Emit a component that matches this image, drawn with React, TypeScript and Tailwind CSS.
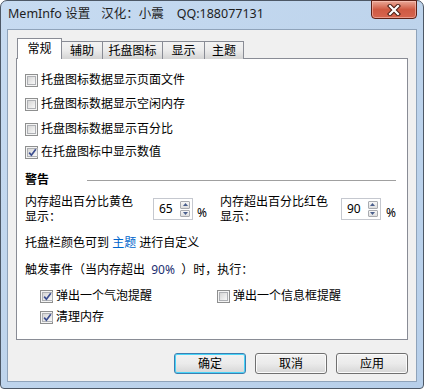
import React from 'react';

const Check: React.FC<{ checked?: boolean }> = ({ checked }) => (
  <span className="w-[13px] h-[13px] shrink-0 border border-[#8e8f8f] bg-[#f4f4f4] p-[1px] flex">
    <span className="flex-1 border border-[#aeb0b4] bg-gradient-to-br from-[#d6d6d6] to-[#f8f8f8] flex items-center justify-center">
      {checked && (
        <svg width="9" height="9" viewBox="0 0 9 9">
          <path d="M1.2 4.6 L3.4 7.2 L7.8 1.2" fill="none" stroke="#3b4d8f" strokeWidth="1.7" />
        </svg>
      )}
    </span>
  </span>
);

const CheckRow: React.FC<{ checked?: boolean; label: string; className?: string }> = ({ checked, label, className }) => (
  <div className={`h-[16px] flex items-center gap-[3px] ${className ?? ''}`}>
    <Check checked={checked} />
    <span>{label}</span>
  </div>
);

const Spin: React.FC<{ value: string }> = ({ value }) => (
  <div className="w-[40px] h-[22px] shrink-0 border border-[#c5c8cf] bg-white flex items-center mt-[4px]">
    <span className="flex-1 pl-[5px] leading-none">{value}</span>
    <div className="w-[12px] h-full py-[2px] pr-[2px] flex flex-col gap-[1px]">
      <div className="flex-1 border border-[#a9abb0] rounded-[1px] bg-gradient-to-b from-[#f7f7f7] to-[#dedede] flex items-center justify-center">
        <svg width="5" height="3" viewBox="0 0 5 3"><path d="M0 3 L2.5 0 L5 3Z" fill="#4a5f8c" /></svg>
      </div>
      <div className="flex-1 border border-[#a9abb0] rounded-[1px] bg-gradient-to-b from-[#f7f7f7] to-[#dedede] flex items-center justify-center">
        <svg width="5" height="3" viewBox="0 0 5 3"><path d="M0 0 L5 0 L2.5 3Z" fill="#4a5f8c" /></svg>
      </div>
    </div>
  </div>
);

const Tab: React.FC<{ label: string; w: string }> = ({ label, w }) => (
  <div className={`${w} h-[18px] -ml-px border border-b-0 border-[#898c95] bg-gradient-to-b from-[#f3f3f3] via-[#ebebeb] to-[#d4d4d4] flex items-center justify-center leading-none`}>
    {label}
  </div>
);

const Button: React.FC<{ label: string; primary?: boolean }> = ({ label, primary }) => (
  <div
    className={`w-[72px] h-[21px] rounded-[3px] border ${primary ? 'border-[#3c7fb1] shadow-[inset_0_0_0_1px_#48d4f8]' : 'border-[#707070] shadow-[inset_0_0_0_1px_#fbfbfb]'} bg-gradient-to-b from-[#f2f2f2] via-[#ebebeb] to-[#d6d6d6] flex items-center justify-center leading-none`}
  >
    {label}
  </div>
);

export default function App() {
  return (
    <div className="w-[424px] h-[389px] rounded-t-[7px] rounded-b-[4px] border border-[#4d5866] bg-gradient-to-br from-[#c7dbf1] via-[#bed4ec] to-[#b7cfea] flex flex-col text-[12px] text-black font-['Noto_Sans','Noto_Sans_CJK_SC',sans-serif]">
      <div className="h-[28px] flex items-start justify-between">
        <div className="pl-[7px] h-[27px] flex items-center text-[12.5px] text-[#1e1e1e] whitespace-pre">
          <span>MemInfo 设置</span>
          <span className="ml-[11px]">汉化：小震</span>
          <span className="ml-[13px]">QQ:188077131</span>
        </div>
        <div className="mr-[6px] -mt-px w-[46px] h-[19px] rounded-b-[4px] border border-[#5e2116] bg-gradient-to-b from-[#e9a898] via-[#cf5a43] to-[#d6654f] shadow-[inset_0_0_0_1px_rgba(255,210,200,0.5)] flex items-center justify-center">
          <svg width="16" height="12" viewBox="0 0 16 12">
            <path d="M4 2 L12 10 M12 2 L4 10" stroke="#4a1d14" strokeWidth="4.2" strokeLinecap="square" />
            <path d="M4 2 L12 10 M12 2 L4 10" stroke="#ffffff" strokeWidth="2.2" strokeLinecap="square" />
          </svg>
        </div>
      </div>

      <div className="flex-1 mx-[6px] mb-[6px] border border-[#8fa3ba] bg-[#f0f0f0] flex flex-col px-[8px] pt-[8px] pb-[7px]">
        <div className="flex items-end h-[21px] relative z-10 -mb-px pl-px">
          <div className="w-[45px] h-[21px] border border-b-0 border-[#898c95] bg-white flex items-center justify-center leading-none pb-[1px]">常规</div>
          <Tab label="辅助" w="w-[42px]" />
          <Tab label="托盘图标" w="w-[61px]" />
          <Tab label="显示" w="w-[43px]" />
          <Tab label="主题" w="w-[40px]" />
        </div>
        <div className="h-[282px] border border-[#898c95] bg-white flex flex-col pl-[8px] pt-[13px]">
          <CheckRow label="托盘图标数据显示页面文件" />
          <CheckRow label="托盘图标数据显示空闲内存" className="mt-[8px]" />
          <CheckRow label="托盘图标数据显示百分比" className="mt-[9px]" />
          <CheckRow label="在托盘图标中显示数值" checked className="mt-[7px]" />

          <div className="mt-[12px] h-[16px] flex items-center pr-[11px]">
            <span className="font-bold">警告</span>
            <div className="ml-[38px] flex-1 h-px bg-[#a0a0a0]" />
          </div>

          <div className="mt-[6px] flex items-start leading-[15px]">
            <div className="w-[128px] flex flex-col">
              <span>内存超出百分比黄色</span>
              <span>显示：</span>
            </div>
            <Spin value="65" />
            <span className="ml-[4px] mt-[11px]">%</span>
            <div className="ml-[13px] w-[121px] flex flex-col">
              <span>内存超出百分比红色</span>
              <span>显示：</span>
            </div>
            <Spin value="90" />
            <span className="ml-[5px] mt-[11px]">%</span>
          </div>

          <div className="mt-[12px] leading-[13px]">
            托盘栏颜色可到 <span className="text-[#0066cc]">主题</span> 进行自定义
          </div>

          <div className="mt-[14px] leading-[13px] whitespace-pre">
            触发事件（当内存超出  <span className="text-[#1c2f70]">90%</span>  ）时，执行：
          </div>

          <div className="mt-[12px] pl-[15px] flex">
            <CheckRow label="弹出一个气泡提醒" checked className="w-[177px]" />
            <CheckRow label="弹出一个信息框提醒" />
          </div>
          <CheckRow label="清理内存" checked className="mt-[5px] pl-[15px]" />
        </div>

        <div className="mt-auto flex justify-end gap-[9px]">
          <Button label="确定" primary />
          <Button label="取消" />
          <Button label="应用" />
        </div>
      </div>
    </div>
  );
}
